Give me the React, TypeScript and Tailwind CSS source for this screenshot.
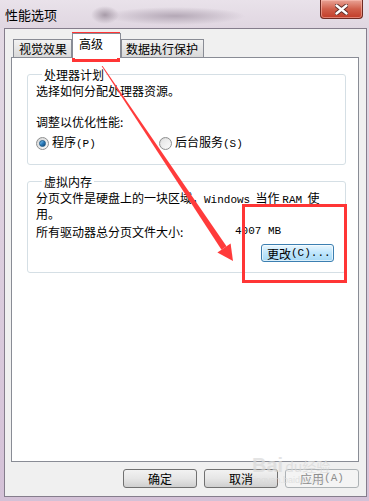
import React from "react";

const cjk = "font-['Noto_Sans_CJK_SC','Noto_Sans',sans-serif]";
const mono = "font-['Liberation_Mono','Noto_Sans_CJK_SC',monospace] text-[11px]";

function Latin({ children }: { children: React.ReactNode }) {
  return <span className={mono}>{children}</span>;
}

function Radio({ checked }: { checked?: boolean }) {
  return (
    <span className="flex h-[13px] w-[13px] shrink-0 items-center justify-center rounded-full border border-[#8e8f8f] bg-gradient-to-br from-[#d6d6d6] to-[#fbfbfb]">
      {checked ? (
        <span className="h-[7px] w-[7px] rounded-full border border-[#1b5a8a] bg-gradient-to-br from-[#8ccdf0] via-[#2c7ec0] to-[#15466f]" />
      ) : (
        <span className="h-[9px] w-[9px] rounded-full bg-gradient-to-br from-[#e4e4e4] to-[#fafafa]" />
      )}
    </span>
  );
}

function DialogButton({ children, disabled }: { children: React.ReactNode; disabled?: boolean }) {
  return (
    <button
      className={
        disabled
          ? "flex h-[19px] w-[74px] items-center justify-center rounded-[3px] border border-[#adb2b5] bg-[#f4f4f4] text-[#8d8d8d]"
          : "flex h-[19px] w-[74px] items-center justify-center rounded-[3px] border border-[#707070] bg-gradient-to-b from-[#f2f2f2] via-[#e6e6e6] to-[#cfcfcf] text-black"
      }
    >
      {children}
    </button>
  );
}

export default function App() {
  return (
    <div className={`relative flex h-[501px] w-[369px] flex-col overflow-hidden bg-gradient-to-b from-[#e4dbe5] to-[#d4c1d7] text-[12px] leading-[13px] text-black ${cjk}`}>
      {/* title bar */}
      <div className="flex h-[28px] shrink-0 items-start bg-[radial-gradient(ellipse_14px_9px_at_105px_15px,#a79ba8,transparent),radial-gradient(ellipse_70px_9px_at_175px_16px,#b4a8b6,transparent),linear-gradient(#e9e2ea,#e0d6e1)]">
        <span className="ml-[5px] mt-[8px] text-[13px] leading-[14px]">性能选项</span>
        <span className="ml-auto mr-[6px] flex h-[19px] w-[43px] items-center justify-center rounded-b-[4px] border border-t-0 border-[#6e2a22] bg-gradient-to-b from-[#e9a396] via-[#d05f4b] to-[#c13b27] shadow-[inset_0_0_0_1px_rgba(255,200,190,0.5)]">
          <svg width="13" height="11" viewBox="0 0 13 11">
            <path d="M1.5 1.5 L11.5 9.5 M11.5 1.5 L1.5 9.5" stroke="#5a2a26" strokeWidth="4.2" strokeLinecap="round" />
            <path d="M1.5 1.5 L11.5 9.5 M11.5 1.5 L1.5 9.5" stroke="#ffffff" strokeWidth="2.4" strokeLinecap="round" />
          </svg>
        </span>
      </div>

      {/* client area */}
      <div className="ml-[4px] flex h-[469px] w-[363px] flex-col border border-[#857d8c] bg-[#f0f0f0] pt-[4px]">
        {/* tabs */}
        <div className="ml-[6px] flex h-[24px] items-end pl-[2px]">
          <div className="flex h-[18px] w-[59px] items-center border border-b-0 border-[#898c95] bg-gradient-to-b from-[#f2f2f2] to-[#d9d9d9] pl-[5px]">
            视觉效果
          </div>
          <div className="relative z-10 mb-[-1px] h-[25px] w-[49px] border border-b-0 border-[#898c95] bg-white pl-[6px] pt-[3px]">
            高级
          </div>
          <div className="flex h-[18px] w-[83px] items-center border border-b-0 border-[#898c95] bg-gradient-to-b from-[#f2f2f2] to-[#d9d9d9] pl-[4px]">
            数据执行保护
          </div>
        </div>

        {/* panel */}
        <div className="ml-[6px] flex h-[405px] w-[348px] flex-col border border-[#898c95] bg-white">
          <fieldset className="ml-[15px] mt-[10px] w-[319px] rounded-[3px] border border-[#d5dfe5] pb-[13px] pl-[8px] pt-[3px]">
            <legend className="ml-[6px] px-[2px] leading-[13px]">处理器计划</legend>
            <div>选择如何分配处理器资源。</div>
            <div className="mt-[18px]">调整以优化性能:</div>
            <div className="mt-[7px] flex items-center">
              <div className="flex w-[123px] items-center gap-[3px]">
                <Radio checked />
                <span>
                  程序<Latin>(P)</Latin>
                </span>
              </div>
              <div className="flex items-center gap-[3px]">
                <Radio />
                <span>
                  后台服务<Latin>(S)</Latin>
                </span>
              </div>
            </div>
          </fieldset>

          <fieldset className="ml-[15px] mt-[10px] w-[319px] rounded-[3px] border border-[#d5dfe5] pb-[10px] pl-[8px] pt-[3px]">
            <legend className="ml-[6px] px-[2px] leading-[13px]">虚拟内存</legend>
            <div className="leading-[13px]">
              分页文件是硬盘上的一块区域，<Latin>Windows</Latin>&nbsp; 当作 <Latin>RAM</Latin>&nbsp; 使
              <br />
              用。
            </div>
            <div className="mt-[5px] flex">
              <span className="w-[199px]">所有驱动器总分页文件大小:</span>
              <Latin>4007 MB</Latin>
            </div>
            <div className="mt-[6px] flex justify-end pr-[11px]">
              <button className="flex h-[18px] w-[73px] items-center rounded-[3px] border border-[#3c7fb1] bg-gradient-to-b from-[#eaf6fd] via-[#bee6fd] to-[#a7d9f5] pl-[5px] shadow-[inset_0_0_0_1px_rgba(255,255,255,0.6)]">
                更改<Latin>(C)...</Latin>
              </button>
            </div>
          </fieldset>
        </div>

        {/* dialog buttons */}
        <div className="mt-[7px] flex justify-end gap-[7px] pr-[7px]">
          <DialogButton>确定</DialogButton>
          <DialogButton>取消</DialogButton>
          <DialogButton disabled>
            应用<Latin>(A)</Latin>
          </DialogButton>
        </div>
      </div>

      {/* annotations */}
      <div className="pointer-events-none absolute left-[72px] top-[32px] h-[30px] w-[48px] border-[3px] border-[#ff3535]" />
      <div className="pointer-events-none absolute left-[242px] top-[204px] h-[79px] w-[105px] border-[3px] border-[#ff3535]" />
      <svg className="pointer-events-none absolute left-0 top-0" width="369" height="501" viewBox="0 0 369 501">
        <polygon points="101.6,66 102.6,66 226.5,246.3 221.5,249.7" fill="#ff3b3b" />
        <polygon points="230.6,243.6 217.4,252.4 233,261" fill="#ff3b3b" />
      </svg>

      {/* watermark */}
      <div className="pointer-events-none absolute left-[252px] top-[455px] flex flex-col text-[#d9d9d9] opacity-70">
        <div className="flex items-end gap-[2px]">
          <span className="font-['Liberation_Sans',sans-serif] text-[20px] font-bold leading-[20px]">Bai</span>
          <span className="text-[14px] leading-[18px]">du经验</span>
        </div>
        <span className="font-['Liberation_Sans',sans-serif] text-[9px] leading-[10px]">jingyan.baidu.com</span>
      </div>
    </div>
  );
}
